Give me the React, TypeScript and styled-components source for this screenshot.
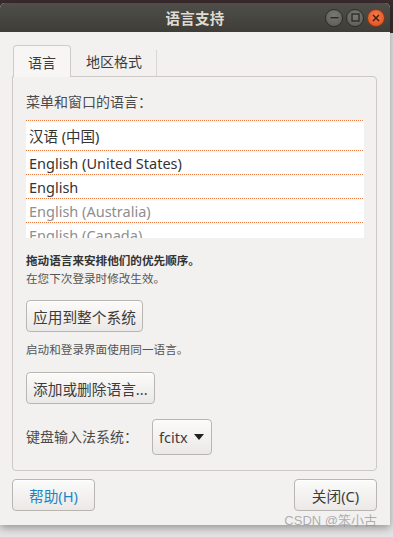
import React from 'react';
import styled, { createGlobalStyle } from 'styled-components';

const GlobalStyle = createGlobalStyle`
  html, body {
    margin: 0;
    padding: 0;
  }
  body {
    font-family: "Noto Sans", "Noto Sans CJK SC", sans-serif;
    color: #3c3c3c;
  }
`;

const Desktop = styled.div`
  width: 393px;
  height: 537px;
  overflow: hidden;
  background: linear-gradient(to bottom, #3a2b2d 0, #3a2b2d 33px, #e4e4e4 33px, #e4e4e4 100%);
  padding-top: 3px;
  box-sizing: border-box;
`;

const Window = styled.div`
  position: relative;
  width: 390px;
  height: 522px;
  display: flex;
  flex-direction: column;
  background: #f2f1f0;
  border-radius: 5px 5px 0 0;
  box-shadow: 0 3px 9px rgba(0, 0, 0, 0.35);
`;

const TitleBar = styled.div`
  height: 29px;
  flex: none;
  display: grid;
  grid-template-columns: 1fr auto 1fr;
  align-items: center;
  background: linear-gradient(to bottom, #504e48, #3f3d38);
  border-radius: 5px 5px 0 0;
`;

const Title = styled.div`
  grid-column: 2;
  font-size: 14.5px;
  font-weight: bold;
  color: #dfdbd2;
  letter-spacing: 0.2px;
`;

const WinButtons = styled.div`
  grid-column: 3;
  justify-self: end;
  display: flex;
  gap: 3px;
  padding-right: 5px;
`;

const WinButton = styled.div<{ close?: boolean }>`
  width: 18px;
  height: 18px;
  border-radius: 50%;
  display: flex;
  align-items: center;
  justify-content: center;
  box-sizing: border-box;
  border: 1px solid ${(p) => (p.close ? '#8c3514' : '#2f2d29')};
  background: ${(p) =>
    p.close
      ? 'radial-gradient(circle at 50% 35%, #f47a4a, #df4e1c)'
      : 'radial-gradient(circle at 50% 35%, #7a7873, #5b5954)'};
`;

const Body = styled.div`
  flex: 1;
  display: flex;
  flex-direction: column;
  padding: 12px 13px 0 12px;
`;

const TabRow = styled.div`
  display: flex;
  align-items: flex-end;
  height: 32px;
  padding-left: 1px;
`;

const Tab = styled.div<{ active?: boolean }>`
  height: ${(p) => (p.active ? '32px' : '26px')};
  box-sizing: border-box;
  display: flex;
  align-items: ${(p) => (p.active ? 'center' : 'flex-start')};
  justify-content: center;
  font-size: 14px;
  color: #3c3c3c;
  padding: ${(p) => (p.active ? '0 14px' : '1px 14px 0 15px')};
  background: ${(p) => (p.active ? '#f7f6f5' : 'transparent')};
  border: ${(p) => (p.active ? '1px solid #cfccc7' : 'none')};
  border-right: 1px solid ${(p) => (p.active ? '#cfccc7' : '#dad7d3')};
  border-bottom: none;
  border-radius: ${(p) => (p.active ? '4px 4px 0 0' : '0')};
  margin-bottom: ${(p) => (p.active ? '-1px' : '0')};
  position: relative;
  z-index: 1;
`;

const Panel = styled.div`
  height: 395px;
  box-sizing: border-box;
  border: 1px solid #cdc9c4;
  border-radius: 0 4px 4px 4px;
  padding: 15px 12px 0 13px;
  display: flex;
  flex-direction: column;
`;

const SectionLabel = styled.div`
  font-size: 14px;
  line-height: 20px;
  color: #4a4a4a;
`;

const LangList = styled.div`
  margin-top: 8px;
  height: 118px;
  overflow: hidden;
  background: #ffffff;
`;

const LangRow = styled.div<{ tall?: boolean; dim?: boolean }>`
  height: ${(p) => (p.tall ? '30px' : '24px')};
  box-sizing: border-box;
  padding-top: 1px;
  background-image: linear-gradient(to right, #f0773f 50%, transparent 50%);
  background-size: 2px 1px;
  background-repeat: repeat-x;
  background-position: top left;
  display: flex;
  align-items: center;
  padding-left: 3px;
  font-size: 14.5px;
  color: ${(p) => (p.dim ? '#8e8e8e' : '#333333')};
  flex: none;
`;

const Note = styled.div<{ bold?: boolean; gap?: number }>`
  font-size: 11.6px;
  line-height: 18px;
  font-weight: ${(p) => (p.bold ? 'bold' : 'normal')};
  color: ${(p) => (p.bold ? '#333333' : '#555555')};
  margin-top: ${(p) => p.gap ?? 0}px;
`;

const Button = styled.div<{ gap?: number; link?: boolean; width?: number }>`
  align-self: flex-start;
  height: 32px;
  box-sizing: border-box;
  ${(p) => (p.width ? `width: ${p.width}px;` : '')}
  display: flex;
  align-items: center;
  justify-content: center;
  padding: 0 6px;
  margin-top: ${(p) => p.gap ?? 0}px;
  font-size: 14.7px;
  color: ${(p) => (p.link ? '#1b86c6' : '#3c3c3c')};
  background: linear-gradient(to bottom, #fbfbfa, #ebe9e7);
  border: 1px solid #b9b6b1;
  border-radius: 4px;
  box-shadow: inset 0 1px 0 #ffffff;
`;

const KeyboardRow = styled.div`
  display: flex;
  align-items: center;
  gap: 14px;
  margin-top: 15px;
`;

const Combo = styled.div`
  height: 36px;
  width: 60px;
  box-sizing: border-box;
  display: flex;
  align-items: center;
  gap: 6px;
  padding-left: 6px;
  font-size: 14.5px;
  color: #3c3c3c;
  background: linear-gradient(to bottom, #fbfbfa, #ebe9e7);
  border: 1px solid #b9b6b1;
  border-radius: 4px;
`;

const Footer = styled.div`
  display: flex;
  justify-content: space-between;
  margin-top: 8px;
`;

const Watermark = styled.div`
  position: absolute;
  right: 13px;
  bottom: -4px;
  font-size: 13px;
  line-height: 16px;
  color: rgba(150, 150, 150, 0.75);
  font-family: "Liberation Sans", "Noto Sans CJK SC", sans-serif;
`;

const languages: { name: string; dim?: boolean }[] = [
  { name: '汉语 (中国)' },
  { name: 'English (United States)' },
  { name: 'English' },
  { name: 'English (Australia)', dim: true },
  { name: 'English (Canada)', dim: true },
];

export default function App() {
  return (
    <>
      <GlobalStyle />
      <Desktop>
        <Window>
          <TitleBar>
            <Title>语言支持</Title>
            <WinButtons>
              <WinButton>
                <svg width="9" height="9" viewBox="0 0 9 9">
                  <rect x="0.5" y="4" width="8" height="1.4" fill="#2c2a26" />
                </svg>
              </WinButton>
              <WinButton>
                <svg width="9" height="9" viewBox="0 0 9 9">
                  <rect x="1" y="1" width="7" height="7" fill="none" stroke="#2c2a26" strokeWidth="1.3" />
                </svg>
              </WinButton>
              <WinButton close>
                <svg width="8" height="8" viewBox="0 0 8 8">
                  <path d="M1 1 L7 7 M7 1 L1 7" stroke="#4a1c0a" strokeWidth="1.5" />
                </svg>
              </WinButton>
            </WinButtons>
          </TitleBar>
          <Body>
            <TabRow>
              <Tab active>语言</Tab>
              <Tab>地区格式</Tab>
            </TabRow>
            <Panel>
              <SectionLabel>菜单和窗口的语言：</SectionLabel>
              <LangList>
                {languages.map((l, i) => (
                  <LangRow key={l.name} tall={i === 0} dim={l.dim}>
                    {l.name}
                  </LangRow>
                ))}
              </LangList>
              <Note bold gap={14}>拖动语言来安排他们的优先顺序。</Note>
              <Note>在您下次登录时修改生效。</Note>
              <Button gap={12}>应用到整个系统</Button>
              <Note gap={9}>启动和登录界面使用同一语言。</Note>
              <Button gap={13}>添加或删除语言...</Button>
              <KeyboardRow>
                <SectionLabel>键盘输入法系统：</SectionLabel>
                <Combo>
                  fcitx
                  <svg width="10" height="6" viewBox="0 0 10 6">
                    <path d="M0 0 H10 L5 6 Z" fill="#222" />
                  </svg>
                </Combo>
              </KeyboardRow>
            </Panel>
            <Footer>
              <Button link width={83}>帮助(H)</Button>
              <Button width={83}>关闭(C)</Button>
            </Footer>
          </Body>
          <Watermark>CSDN @笨小古</Watermark>
        </Window>
      </Desktop>
    </>
  );
}
